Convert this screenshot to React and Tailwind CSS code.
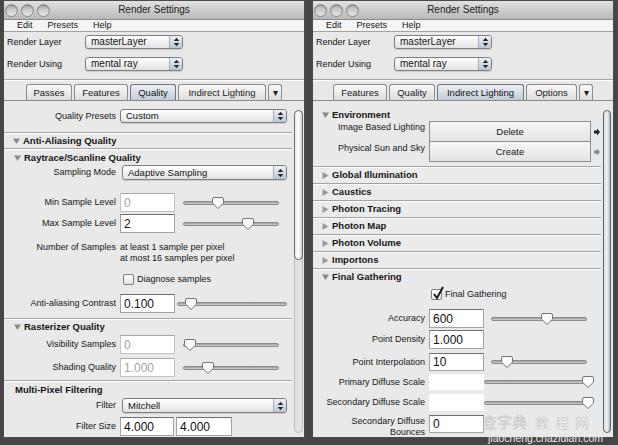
import React from 'react';

const UpDown = () => (
  <svg width="7" height="10" viewBox="0 0 7 10">
    <path d="M3.5 0.8L6.3 4H0.7Z" fill="#2a2a2a" />
    <path d="M0.7 6H6.3L3.5 9.2Z" fill="#2a2a2a" />
  </svg>
);

const Tri = ({ open }) =>
  open ? (
    <svg width="7" height="6" viewBox="0 0 7 6" className="shrink-0">
      <path d="M0 0.5H7L3.5 6Z" fill="#8a8a8a" />
    </svg>
  ) : (
    <svg width="7" height="7" viewBox="0 0 7 7" className="shrink-0">
      <path d="M0.5 0L6.5 3.5L0.5 7Z" fill="#9a9a9a" />
    </svg>
  );

function Dropdown({ className, text = 'text-[9.5px]', children }) {
  return (
    <div
      className={`flex items-center rounded-[3px] border border-[#7e7e7e] bg-linear-to-b from-white to-[#e2e2e2] shadow-[0_1px_1px_rgba(0,0,0,0.12)] ${className}`}
    >
      <span className={`flex-1 pl-[5px] leading-none text-[#151515] ${text}`}>{children}</span>
      <span className="h-full w-[13px] flex items-center justify-center rounded-r-[2px] bg-linear-to-b from-[#eef2f7] to-[#b9c6d6] border-l border-[#a6adb6]">
        <UpDown />
      </span>
    </div>
  );
}

function Label({ children, className = '' }) {
  return (
    <div className={`w-[113px] shrink-0 pr-[1px] text-right text-[9px] leading-[11px] text-[#151515] ${className}`}>
      {children}
    </div>
  );
}

function Input({ value, disabled, className = 'w-[55px]' }) {
  return (
    <div
      className={`h-full shrink-0 bg-white border border-[#a3a3a3] border-t-[#6f6f6f] flex items-center pl-[3px] text-[12px] leading-none ${
        disabled ? 'text-[#a5a5a5] border-[#c4c4c4] border-t-[#a8a8a8]' : 'text-[#111]'
      } ${className}`}
    >
      {value}
    </div>
  );
}

function Slider({ className, pos }) {
  return (
    <div className={`relative h-[4px] shrink-0 rounded-full border border-[#8a8a8a] bg-linear-to-b from-[#9a9a9a] to-[#d6d6d6] ${className}`}>
      <svg
        className="absolute top-[-5px]"
        style={{ left: pos - 6 }}
        width="12"
        height="12"
        viewBox="0 0 12 12"
      >
        <path
          d="M2 0.5H10Q11.5 0.5 11.5 2V6.2L6 11.5L0.5 6.2V2Q0.5 0.5 2 0.5Z"
          fill="#fbfbfb"
          stroke="#747474"
        />
      </svg>
    </div>
  );
}

function Checkbox({ checked }) {
  return (
    <span className="relative w-[11px] h-[11px] shrink-0 rounded-[2px] border border-[#7c7c7c] bg-linear-to-b from-white to-[#e6e6e6]">
      {checked && (
        <svg className="absolute left-[0px] top-[-4px]" width="12" height="14" viewBox="0 0 12 14">
          <path d="M2 8L5 12L11 1" fill="none" stroke="#1c1c1c" strokeWidth="2" />
        </svg>
      )}
    </span>
  );
}

function Header({ open, children, className = '' }) {
  return (
    <div className={`flex items-center gap-[3px] pl-[9px] text-[9.5px] font-bold text-[#161616] shrink-0 ${className}`}>
      {open !== undefined && <Tri open={open} />}
      <span className="leading-none">{children}</span>
    </div>
  );
}

function Tab({ label, w, active }) {
  return (
    <div
      className={`h-[16px] ${w} flex items-center justify-center rounded-t-[3px] border border-b-0 text-[9.5px] leading-none ${
        active
          ? 'border-[#6f7680] bg-linear-to-b from-[#eef1f5] to-[#c3cbd6] text-[#111]'
          : 'border-[#8d8d8d] bg-linear-to-b from-[#fafafa] to-[#dcdcdc] text-[#1a1a1a]'
      }`}
    >
      {label}
    </div>
  );
}

function Light() {
  return (
    <span className="w-[13px] h-[13px] rounded-full border border-[#8c8c8c] bg-linear-to-b from-[#b4b4b4] to-[#e8e8e8] shadow-[inset_0_1px_1px_rgba(0,0,0,0.25)]" />
  );
}

function Window({ tabs, children, scroll }) {
  return (
    <div className="w-[302px] h-[438px] shrink-0 flex flex-col bg-[#e8e8e8] border border-[#4a4a4a] overflow-hidden">
      <div className="h-[19px] shrink-0 grid grid-cols-[60px_1fr_60px] items-center bg-linear-to-b from-[#e2e2e2] to-[#b8b8b8] border-b border-[#8a8a8a]">
        <div className="flex gap-[3px] pl-[1px]">
          <Light />
          <Light />
          <Light />
        </div>
        <div className="text-center text-[10px] leading-none text-[#1a1a1a]">Render Settings</div>
        <div />
      </div>
      <div className="h-[12px] shrink-0 flex items-center gap-[15px] pl-[13px] bg-[#f4f4f4] border-b border-[#a2a2a2] text-[9px] leading-none text-[#151515]">
        <span>Edit</span>
        <span>Presets</span>
        <span>Help</span>
      </div>
      <div className="shrink-0 pt-[3px] pb-[8px] pl-[3px] flex flex-col gap-[8px] border-b border-[#a8a8a8]">
        <div className="flex items-center h-[14px]">
          <span className="w-[78px] text-[9px] leading-none text-[#111]">Render Layer</span>
          <Dropdown className="w-[98px] h-[14px]" text="text-[10px]">masterLayer</Dropdown>
        </div>
        <div className="flex items-center h-[14px]">
          <span className="w-[78px] text-[9px] leading-none text-[#111]">Render Using</span>
          <Dropdown className="w-[98px] h-[14px]" text="text-[10px]">mental ray</Dropdown>
        </div>
      </div>
      <div className="shrink-0 pt-[3px] flex justify-center gap-[2px] border-t border-white">
        {tabs}
      </div>
      <div className="flex-1 min-h-0 flex border-t border-[#8a8a8a] bg-[#e9e9e9]">
        <div className="flex-1 min-w-0 flex flex-col">{children}</div>
        <div className="w-[12px] shrink-0 flex justify-center pt-[9px] pb-[4px]">{scroll}</div>
      </div>
    </div>
  );
}

const MapIcon = ({ dim }) => (
  <svg width="7" height="8" viewBox="0 0 7 8" className="shrink-0 ml-[3px]">
    <path d="M0 2.5H3V0.5L6 4L3 7.5V5.5H0Z" fill={dim ? '#8a8a8a' : '#222'} />
  </svg>
);

function LeftContent() {
  return (
    <>
      <div className="h-[32px] shrink-0 pt-[8px] border-b border-[#a5a5a5]">
        <div className="flex items-center h-[14px]">
          <Label>Quality Presets</Label>
          <Dropdown className="ml-[3px] w-[167px] h-[14px]">Custom</Dropdown>
        </div>
      </div>
      <Header open className="h-[16px] border-b border-[#a5a5a5] border-t border-t-white">Anti-Aliasing Quality</Header>
      <Header open className="h-[16px] pl-[10px] border-t border-white">Raytrace/Scanline Quality</Header>
      <div className="flex items-center h-[15px] shrink-0">
        <Label>Sampling Mode</Label>
        <Dropdown className="ml-[5px] w-[165px] h-[15px]">Adaptive Sampling</Dropdown>
      </div>
      <div className="flex items-center h-[19px] mt-[13px] shrink-0">
        <Label>Min Sample Level</Label>
        <div className="ml-[3px] h-full flex items-center">
          <Input value="0" disabled />
          <Slider className="ml-[8px] w-[96px]" pos={34} />
        </div>
      </div>
      <div className="flex items-center h-[19px] mt-[2px] shrink-0">
        <Label>Max Sample Level</Label>
        <div className="ml-[3px] h-full flex items-center">
          <Input value="2" />
          <Slider className="ml-[8px] w-[96px]" pos={64} />
        </div>
      </div>
      <div className="flex mt-[9px] shrink-0">
        <Label>Number of Samples</Label>
        <div className="ml-[3px] text-[9px] leading-[11px] text-[#151515]">
          <div>at least 1 sample per pixel</div>
          <div>at most 16 samples per pixel</div>
        </div>
      </div>
      <div className="flex items-center h-[12px] mt-[9px] shrink-0 pl-[119px] gap-[3px]">
        <Checkbox />
        <span className="text-[9px] leading-none text-[#151515]">Diagnose samples</span>
      </div>
      <div className="flex items-center h-[19px] mt-[9px] shrink-0">
        <Label>Anti-aliasing Contrast</Label>
        <div className="ml-[3px] h-full flex items-center">
          <Input value="0.100" />
          <Slider className="ml-[2px] w-[110px]" pos={13} />
        </div>
      </div>
      <div className="h-[6px] shrink-0 border-b border-[#a5a5a5]" />
      <Header open className="h-[15px] pl-[10px] border-t border-white">Rasterizer Quality</Header>
      <div className="flex items-center h-[19px] mt-[1px] shrink-0">
        <Label>Visibility Samples</Label>
        <div className="ml-[3px] h-full flex items-center">
          <Input value="0" disabled />
          <Slider className="ml-[8px] w-[96px]" pos={6} />
        </div>
      </div>
      <div className="flex items-center h-[19px] mt-[4px] shrink-0">
        <Label>Shading Quality</Label>
        <div className="ml-[3px] h-full flex items-center">
          <Input value="1.000" disabled />
          <Slider className="ml-[8px] w-[96px]" pos={24} />
        </div>
      </div>
      <div className="h-[4px] shrink-0 border-b border-[#a5a5a5]" />
      <Header className="h-[16px] pl-[11px] border-t border-white">Multi-Pixel Filtering</Header>
      <div className="flex items-center h-[15px] mt-[1px] shrink-0">
        <Label>Filter</Label>
        <Dropdown className="ml-[5px] w-[165px] h-[15px]">Mitchell</Dropdown>
      </div>
      <div className="flex items-center h-[19px] mt-[4px] shrink-0">
        <Label>Filter Size</Label>
        <div className="ml-[3px] h-full flex items-center gap-[2px]">
          <Input value="4.000" className="w-[54px]" />
          <Input value="4.000" className="w-[56px]" />
        </div>
      </div>
    </>
  );
}

const collapsed = ['Global Illumination', 'Caustics', 'Photon Tracing', 'Photon Map', 'Photon Volume', 'Importons'];

function RightContent() {
  return (
    <>
      <div className="h-[20px] shrink-0 pt-[8px]">
        <Header open className="h-[11px]">Environment</Header>
      </div>
      <div className="flex items-start h-[21px] shrink-0">
        <Label className="pt-[1px]">Image Based Lighting</Label>
        <div className="ml-[3px] w-[165px] h-full flex items-center justify-center border border-[#8e8e8e] bg-linear-to-b from-[#f6f6f6] to-[#e4e4e4] text-[9.5px] leading-none text-[#151515]">
          Delete
        </div>
        <div className="h-full flex items-center">
          <MapIcon />
        </div>
      </div>
      <div className="flex items-start h-[21px] -mt-[1px] shrink-0">
        <Label className="pt-[2px]">Physical Sun and Sky</Label>
        <div className="ml-[3px] w-[165px] h-full flex items-center justify-center border border-[#8e8e8e] bg-linear-to-b from-[#f6f6f6] to-[#e4e4e4] text-[9.5px] leading-none text-[#151515]">
          Create
        </div>
        <div className="h-full flex items-center">
          <MapIcon dim />
        </div>
      </div>
      <div className="h-[4px] shrink-0" />
      {collapsed.map((name) => (
        <Header
          key={name}
          open={false}
          className="h-[17px] border-t border-[#a4a4a4] shadow-[inset_0_1px_0_#fbfbfb] bg-[#ebebeb]"
        >
          {name}
        </Header>
      ))}
      <Header open className="h-[17px] border-t border-[#a4a4a4] shadow-[inset_0_1px_0_#fbfbfb]">
        Final Gathering
      </Header>
      <div className="flex items-center h-[11px] mt-[4px] shrink-0 pl-[118px] gap-[3px]">
        <Checkbox checked />
        <span className="text-[9px] leading-none text-[#151515]">Final Gathering</span>
      </div>
      <div className="flex items-center h-[19px] mt-[9px] shrink-0">
        <Label>Accuracy</Label>
        <div className="ml-[3px] h-full flex items-center">
          <Input value="600" />
          <Slider className="ml-[7px] w-[96px]" pos={55} />
        </div>
      </div>
      <div className="flex items-center h-[19px] mt-[2px] shrink-0">
        <Label>Point Density</Label>
        <div className="ml-[3px] h-full flex items-center">
          <Input value="1.000" />
        </div>
      </div>
      <div className="flex items-center h-[18px] mt-[4px] shrink-0">
        <Label>Point Interpolation</Label>
        <div className="ml-[3px] h-full flex items-center">
          <Input value="10" />
          <Slider className="ml-[7px] w-[96px]" pos={15} />
        </div>
      </div>
      <div className="flex items-center h-[16px] mt-[3px] shrink-0">
        <Label>Primary Diffuse Scale</Label>
        <div className="ml-[3px] h-full flex items-center">
          <div className="w-[55px] h-full bg-white shrink-0" />
          <Slider className="w-[105px]" pos={103} />
        </div>
      </div>
      <div className="flex items-center h-[17px] mt-[4px] shrink-0">
        <Label>Secondary Diffuse Scale</Label>
        <div className="ml-[3px] h-full flex items-center">
          <div className="w-[55px] h-full bg-white shrink-0" />
          <Slider className="w-[105px]" pos={103} />
        </div>
      </div>
      <div className="flex items-start h-[18px] mt-[4px] shrink-0">
        <Label className="pt-[1px] leading-[10px]">
          Secondary Diffuse
          <br />
          Bounces
        </Label>
        <div className="ml-[3px] h-full flex items-center">
          <Input value="0" />
        </div>
      </div>
    </>
  );
}

export default function App() {
  return (
    <div className="relative w-[618px] h-[445px] overflow-hidden bg-[#464646] flex gap-[7px] pl-[3px] font-['Liberation_Sans',Arial,sans-serif]">
      <Window
        tabs={
          <>
            <Tab label="Passes" w="w-[46px]" />
            <Tab label="Features" w="w-[54px]" />
            <Tab label="Quality" w="w-[46px]" active />
            <Tab label="Indirect Lighting" w="w-[88px]" />
            <Tab label="▾" w="w-[14px]" />
          </>
        }
        scroll={
          <div className="w-[9px] h-full rounded-full border border-[#b9b9b9] bg-[#e2e2e2] flex flex-col">
            <div className="h-[150px] -mx-px -mt-px rounded-full border border-[#6c6c6c] bg-linear-to-r from-[#ededed] via-white to-[#cfcfcf]" />
          </div>
        }
      >
        <LeftContent />
      </Window>
      <Window
        tabs={
          <>
            <Tab label="Features" w="w-[54px]" />
            <Tab label="Quality" w="w-[46px]" />
            <Tab label="Indirect Lighting" w="w-[87px]" active />
            <Tab label="Options" w="w-[51px]" />
            <Tab label="▾" w="w-[14px]" />
          </>
        }
        scroll={
          <div className="w-[8px] h-full rounded-full border border-[#5e646c] bg-linear-to-r from-[#d8dfe8] via-[#eef2f6] to-[#aeb9c6]" />
        }
      >
        <RightContent />
      </Window>
      <div className="absolute left-[482px] top-[414px] flex items-end gap-[8px] text-[#c9c9c9]/80 pointer-events-none">
        <span className="text-[15px] leading-none font-bold font-['Noto_Sans_CJK_SC',sans-serif]">查字典</span>
        <span className="text-[14px] leading-none tracking-[6px] font-['Noto_Sans_CJK_SC',sans-serif]">教程网</span>
      </div>
      <div className="absolute left-[488px] top-[433px] text-[10.5px] leading-none text-[#e6e6e6] pointer-events-none">
        jiaocheng.chazidian.com
      </div>
    </div>
  );
}
